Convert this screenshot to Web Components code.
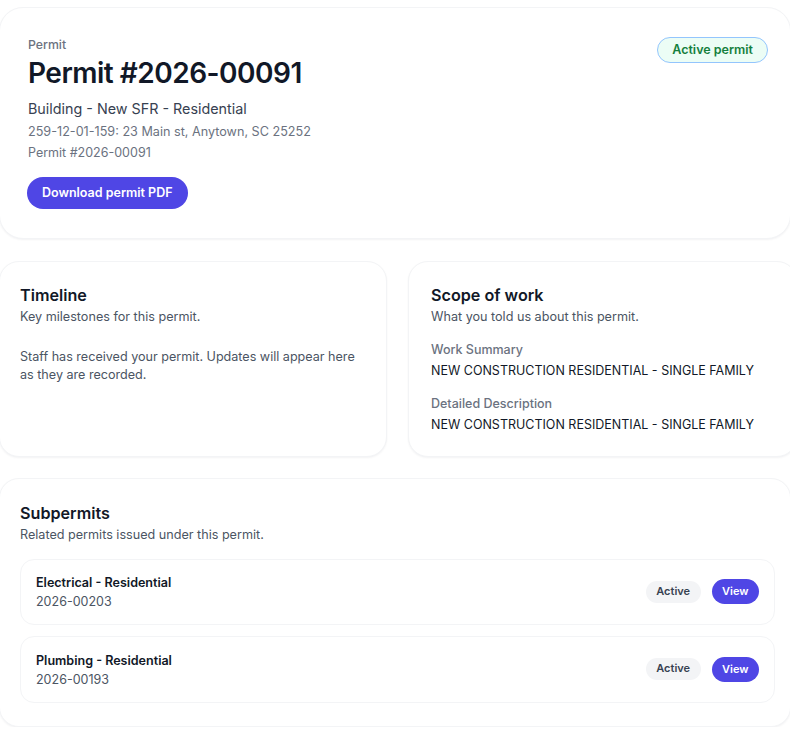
<!DOCTYPE html>
<html lang="en"><head><meta charset="utf-8"><title>Permit</title>
<style>
html,body{margin:0;background:#fff;overflow:hidden}
body{font-family:Inter,"Liberation Sans",sans-serif;color:#111827}
</style></head><body>
<template id="t-page"><style>
:host{display:flex;flex-direction:column;padding:7px 0 0;margin:0 -1px;box-sizing:border-box}
.two{display:grid;grid-template-columns:388px 1fr;gap:21px;margin:22.5px -6px 21px 0}
</style><slot name="hero"></slot><div class="two"><slot name="a"></slot><slot name="b"></slot></div><slot name="sub"></slot></template>

<template id="t-card"><style>
:host{display:block;box-sizing:border-box;background:#fff;border:1px solid #f3f4f6;border-radius:20px;box-shadow:0 1px 2px rgba(17,24,39,.05);padding:var(--pt,21px) var(--pr,20px) 20px var(--pl,20px)}
h2{margin:0;font-size:16.15px;line-height:25px;font-weight:600;color:#111827}
p{margin:0;font-size:12.62px;line-height:18px;color:#4b5563}
</style><h2><slot name="title"></slot></h2><p><slot name="desc"></slot></p><slot></slot></template>

<template id="t-hero"><style>
:host{display:flex;justify-content:space-between;align-items:flex-start;box-sizing:border-box;height:231.5px;background:#fff;border:1px solid #f3f4f6;border-radius:24px;box-shadow:0 1px 2px rgba(17,24,39,.05);padding:28px 22px 28px 28px}
.label{font-size:12.3px;line-height:18px;font-weight:500;color:#6b7280}
h1{margin:1px 0 0;font-size:28px;line-height:36px;font-weight:600;letter-spacing:-.5px;color:#111827}
.type{margin-top:8px;font-size:14.33px;line-height:20px;color:#374151}
.meta{margin-top:4px;font-size:12.63px;line-height:18px;color:#6b7280}
.meta+.meta{margin-top:3px;font-size:12.5px}
.dl{display:inline-block;margin:15px 0 0 -1px;height:32px;line-height:32px;padding:0 15px;border-radius:16px;background:#4f46e5;color:#fff;font-size:12.5px;font-weight:600}
.badge{display:block;box-sizing:border-box;height:26px;line-height:24px;padding:0 14px;margin-top:1px;border:1px solid #93c5fd;border-radius:13px;background:#ecfdf5;color:#15803d;font-size:12.5px;font-weight:600}
</style><div><div class="label"><slot name="label"></slot></div><h1><slot name="title"></slot></h1><div class="type"><slot name="type"></slot></div><div class="meta"><slot name="addr"></slot></div><div class="meta"><slot name="num"></slot></div><a class="dl"><slot name="action"></slot></a></div><span class="badge"><slot name="status"></slot></span></template>

<template id="t-field"><style>
:host{display:block;margin-top:15px}
.k{font-size:12.5px;line-height:18px;font-weight:500;color:#6b7280}
.v{margin-top:3px;font-size:12.5px;line-height:18px;color:#111827}
</style><div class="k"><slot name="k"></slot></div><div class="v"><slot name="v"></slot></div></template>

<template id="t-row"><style>
:host{display:flex;align-items:center;justify-content:space-between;box-sizing:border-box;height:66.5px;border:1px solid #f3f4f6;border-radius:14px;padding:0 15px;background:#fff}
.t{margin-top:2px}
.n{font-size:12.55px;line-height:18px;font-weight:600;color:#111827}
.c{margin-top:1px;font-size:12.5px;line-height:18px;color:#4b5563}
.r{display:flex;align-items:center;gap:11px}
.s{height:22px;line-height:21px;padding:0 10.5px;border-radius:11px;background:#f3f4f6;color:#374151;font-size:11px;font-weight:600}
.b{height:25px;line-height:24px;padding:0 10.5px;border-radius:13px;background:#4f46e5;color:#fff;font-size:11px;font-weight:600}
</style><div class="t"><div class="n"><slot name="n"></slot></div><div class="c"><slot name="c"></slot></div></div><div class="r"><span class="s"><slot name="s"></slot></span><span class="b"><slot name="b"></slot></span></div></template>

<template id="t-stack"><style>:host{display:flex;flex-direction:column;gap:11px;margin-top:15px}</style><slot></slot></template>
<template id="t-note"><style>:host{display:block;margin-top:22px;font-size:12.58px;line-height:18px;color:#4b5563;max-width:345px}</style><slot></slot></template>

<permit-page>
<permit-hero slot="hero">
<span slot="label">Permit</span><span slot="title">Permit #2026-00091</span><span slot="type">Building - New SFR - Residential</span><span slot="addr">259-12-01-159: 23 Main st, Anytown, SC 25252</span><span slot="num">Permit #2026-00091</span><span slot="action">Download permit PDF</span><span slot="status">Active permit</span>
</permit-hero>
<permit-card slot="a" style="height:196px"><span slot="title">Timeline</span><span slot="desc">Key milestones for this permit.</span>
<permit-note>Staff has received your permit. Updates will appear here as they are recorded.</permit-note></permit-card>
<permit-card slot="b" style="height:196px;--pl:22px"><span slot="title">Scope of work</span><span slot="desc">What you told us about this permit.</span>
<permit-field><span slot="k">Work Summary</span><span slot="v">NEW CONSTRUCTION RESIDENTIAL - SINGLE FAMILY</span></permit-field>
<permit-field><span slot="k">Detailed Description</span><span slot="v">NEW CONSTRUCTION RESIDENTIAL - SINGLE FAMILY</span></permit-field></permit-card>
<permit-card slot="sub" style="height:248.5px;--pr:15px;--pt:21.5px"><span slot="title">Subpermits</span><span slot="desc">Related permits issued under this permit.</span>
<permit-stack>
<permit-row><span slot="n">Electrical - Residential</span><span slot="c">2026-00203</span><span slot="s">Active</span><span slot="b">View</span></permit-row>
<permit-row><span slot="n">Plumbing - Residential</span><span slot="c">2026-00193</span><span slot="s">Active</span><span slot="b">View</span></permit-row>
</permit-stack></permit-card>
</permit-page>
<script>
const defs={'permit-page':'t-page','permit-card':'t-card','permit-hero':'t-hero','permit-field':'t-field','permit-row':'t-row','permit-stack':'t-stack','permit-note':'t-note'};
for(const [n,t] of Object.entries(defs)){customElements.define(n,class extends HTMLElement{constructor(){super();this.attachShadow({mode:'open'}).appendChild(document.getElementById(t).content.cloneNode(true));}});}
</script>
</body></html>
